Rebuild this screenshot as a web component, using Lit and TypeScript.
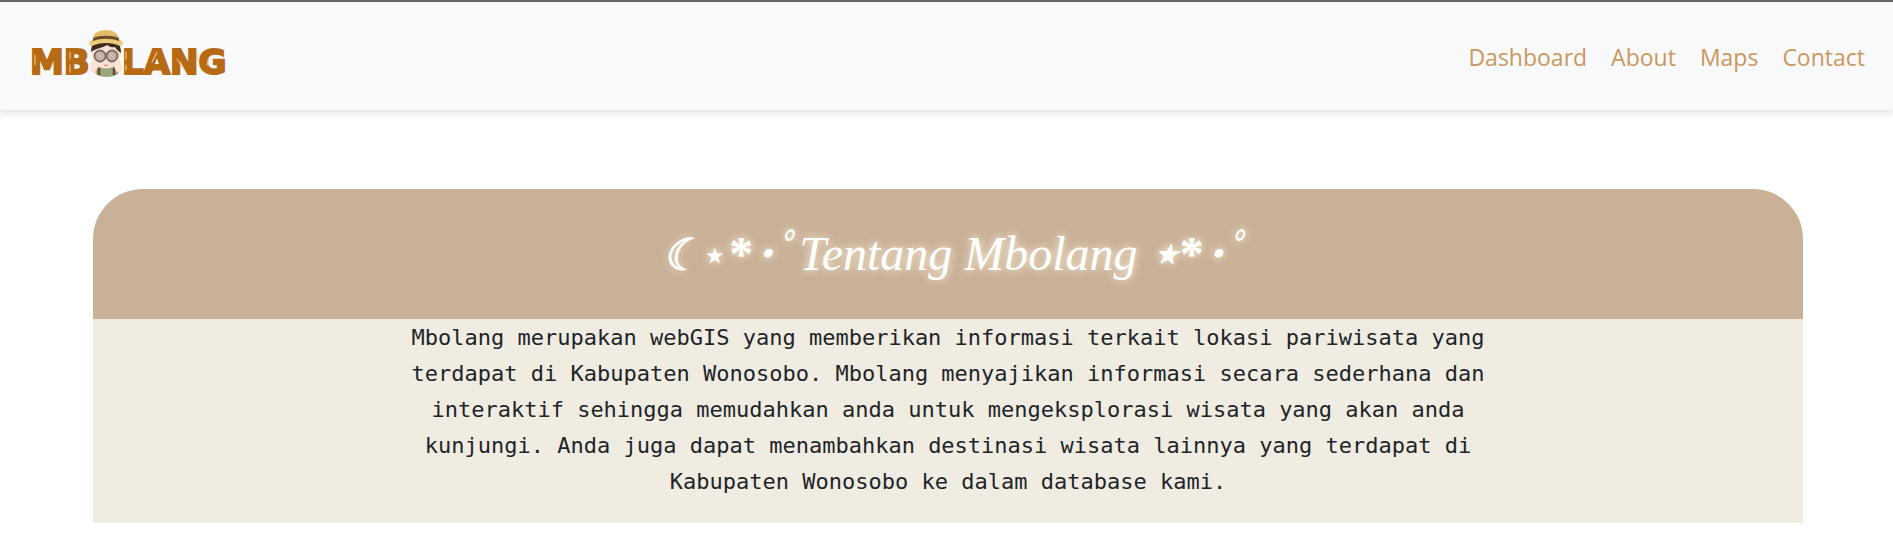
import { LitElement, html, css } from "lit";
import { customElement } from "lit/decorators.js";

@customElement("mbolang-logo")
class MbolangLogo extends LitElement {
  static styles = css`
    :host { display: block; }
    .logo { display: block; width: 208px; height: 56px; }
    .word { font-family: "DejaVu Sans", Inter, sans-serif; font-weight: 700; font-size: 34px; fill: #b56a13; stroke: #b56a13; stroke-width: 2; }
    .shine { fill: none; stroke: #f0c48c; stroke-width: 1.1; stroke-linecap: round; }
  `;
  render() {
    return html`
      <svg class="logo" viewBox="0 0 208 56" role="img" aria-label="Mbolang">
        <text class="word" x="2" y="46">MB</text>
        <text class="word" x="94" y="46">LANG</text>
        <path class="shine" d="M7 27v10M42 24v7M42 37v7M98 24v7M98 37v5M129 24l-5 10M149 31l6 9M169 24v9M181 30l-2 7"/>
        <g transform="translate(1 -2)">
          <path d="M64 34c-2 2-3 7-1 11 6 7 24 7 29-1 1-4 0-8-2-11z" fill="#f4d5c2"/>
          <path d="M66 43c6-5 18-5 24 0l-1 5c-6 4-17 4-22 0z" fill="#9aa57c"/>
          <path d="M70 42v7M85 42v7" stroke="#6b4530" stroke-width="2.4"/>
          <ellipse cx="77" cy="29" rx="14.5" ry="13.5" fill="#fae0cf"/>
          <path d="M62 26c0-9 5-14 15-14s15 5 15 15c-3-2-5-4-6-6-4 1-6-1-8-2-4 3-11 3-16 7z" fill="#41291f"/>
          <path d="M60 17c1-3 4-4 7-4h20c3 0 6 1 7 4 0 2-1 3-3 3-8-4-20-4-28 0-2 0-3-1-3-3z" fill="#edcb7a"/>
          <path d="M64 13c0-6 6-9 13-9s12 3 13 9l1 2c-8-3-19-3-28 0z" fill="#e4bd69"/>
          <path d="M64 12c7-3 19-3 26 0v3c-8-3-18-3-26 0z" fill="#6b4e2b"/>
          <path d="M74 27h7v4h-7z" fill="#7e7471"/>
          <circle cx="71" cy="30" r="5.5" fill="#c9b1a5" stroke="#786e6c" stroke-width="1.8"/>
          <circle cx="83" cy="30" r="5.5" fill="#c9b1a5" stroke="#786e6c" stroke-width="1.8"/>
          <path d="M69 28l3 3M81 28l3 3" stroke="#e6d5cc"/>
          <path d="M75 39q2 1 4 0" fill="none" stroke="#c27a6a"/>
          <path d="M62 46c-2-6 0-12 4-12 4 2 4 7 0 12zM92 46c2-6 0-12-4-12-4 2-4 7 0 12z" fill="#fbe3d5"/>
        </g>
      </svg>`;
  }
}

@customElement("app-root")
class AppRoot extends LitElement {
  static styles = css`
    :host { display: block; min-height: 100vh; background: #fff; color: #212529; }
    .bar {
      display: flex; justify-content: space-between; align-items: center;
      box-sizing: border-box; min-height: 110px; padding: 0 28px;
      border-top: 2px solid #666; background: #f8f9fb;
      box-shadow: 0 2px 8px rgba(0, 0, 0, 0.15);
    }
    .brand { display: block; }
    .links { display: flex; gap: 24px; padding-top: 2px; font: 23px/36px "Open Sans", "Noto Sans", sans-serif; }
    .link { color: #cb985c; text-decoration: none; }
    .card { margin: 79px 90px 32px 93px; background: #f0ece1; }
    .wrap { background: #fff; }
    .head {
      display: flex; justify-content: center; align-items: center;
      box-sizing: border-box; min-height: 130px; padding: 2px 0 0 16px;
      border-radius: 50px 50px 0 0; background: #c9b198;
    }
    .title {
      margin: 0; color: #fff; white-space: nowrap;
      font: italic 400 48px/58px "Liberation Serif", "Noto Sans CJK JP", serif;
      text-shadow: 0 0 8px #fff6dc;
    }
    .moon { font-size: 44px; -webkit-text-stroke: 1px #fff; }
    .small { font-size: 44px; font-style: normal; }
    .star { font-weight: 700; }
    .aster { font-style: normal; font-weight: 700; }
    .dots { font-size: 44px; font-weight: 700; }
    .text {
      max-width: 1088px; margin: 0 auto; padding: 1px 0 23px; text-align: center;
      font: 22px/36px "DejaVu Sans Mono", "Liberation Mono", monospace;
    }
  `;
  render() {
    const links = ["Dashboard", "About", "Maps", "Contact"];
    return html`
      <header class="bar">
        <a class="brand" href="#"><mbolang-logo></mbolang-logo></a>
        <nav class="links">${links.map((l) => html`<a class="link" href="#${l.toLowerCase()}">${l}</a>`)}</nav>
      </header>
      <main class="card">
        <div class="wrap"><div class="head"><h1 class="title"><span class="moon">☾</span><span class="small">⋆</span><span class="aster">*</span><span class="dots">･</span>ﾟTentang Mbolang <span class="star">⋆</span><span class="aster">*</span><span class="dots">･</span>ﾟ</h1></div></div>
        <p class="text">Mbolang merupakan webGIS yang memberikan informasi terkait lokasi pariwisata yang terdapat di Kabupaten Wonosobo. Mbolang menyajikan informasi secara sederhana dan interaktif sehingga memudahkan anda untuk mengeksplorasi wisata yang akan anda kunjungi. Anda juga dapat menambahkan destinasi wisata lainnya yang terdapat di Kabupaten Wonosobo ke dalam database kami.</p>
      </main>`;
  }
}
